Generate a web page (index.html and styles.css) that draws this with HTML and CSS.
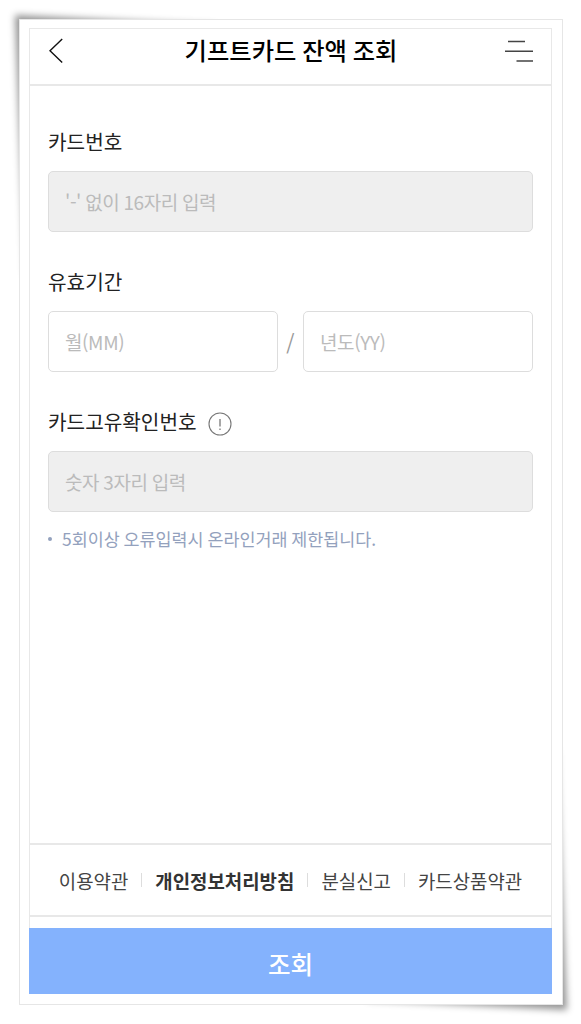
FILE: index.html
```
<!DOCTYPE html>
<html lang="ko">
<head>
    <meta charset="UTF-8">
    <meta name="viewport" content="width=device-width, initial-scale=1.0">
    <title>기프트카드 잔액 조회</title>
    <link rel="stylesheet" href="styles.css">
</head>
<body>
    <div class="frame">
        <div class="shadow shadow-top"></div>
        <div class="shadow shadow-bottom"></div>
        <div class="paper">
            <div class="screen">
                <header class="header">
                    <svg class="back" width="14" height="26" viewBox="0 0 14 26">
                        <path d="M13.2 1 1 12.8 13.2 24.5" fill="none" stroke="#111" stroke-width="1.4"/>
                    </svg>
                    <h1>기프트카드 잔액 조회</h1>
                    <svg class="menu" width="28" height="22" viewBox="0 0 28 22">
                        <path d="M3 1.5h17M0 11.2h28M11.5 21h16.5" fill="none" stroke="#444" stroke-width="1.4"/>
                    </svg>
                </header>

                <main class="content">
                    <div class="form-group">
                        <label for="cardNumber">카드번호</label>
                        <input type="text" id="cardNumber" class="filled" placeholder="'-' 없이 16자리 입력">
                    </div>

                    <div class="form-group">
                        <label for="month">유효기간</label>
                        <div class="expiry">
                            <input type="text" id="month" placeholder="월(MM)">
                            <span class="slash">/</span>
                            <input type="text" id="year" placeholder="년도(YY)">
                        </div>
                    </div>

                    <div class="form-group">
                        <label for="cvc">카드고유확인번호
                            <svg class="info" width="24" height="24" viewBox="0 0 24 24">
                                <circle cx="12" cy="12" r="11" fill="none" stroke="#777" stroke-width="1.1"/>
                                <path d="M12 7v7.5M12 16.5v1.5" stroke="#777" stroke-width="1.3"/>
                            </svg>
                        </label>
                        <input type="text" id="cvc" class="filled" placeholder="숫자 3자리 입력">
                    </div>

                    <p class="notice">5회이상 오류입력시 온라인거래 제한됩니다.</p>
                </main>

                <footer class="footer">
                    <a>이용약관</a>
                    <a class="bold">개인정보처리방침</a>
                    <a>분실신고</a>
                    <a>카드상품약관</a>
                </footer>
                <button type="button">조회</button>
            </div>
        </div>
    </div>
</body>
</html>
```
FILE: styles.css
```
* {
    box-sizing: border-box;
}
body {
    margin: 0;
    padding: 19px 18px 19px 19px;
    height: 1024px;
    overflow: hidden;
    background-color: #fff;
    font-family: 'Noto Sans CJK KR', sans-serif;
    color: #222;
}
.frame {
    position: relative;
    width: 544px;
    height: 986px;
}
.paper {
    position: relative;
    height: 100%;
    padding: 8px 10px 10px 9px;
    border: 1px solid #e6e6e6;
    background-color: #fff;
}
/* 모서리가 들린 종이 그림자 */
.shadow {
    position: absolute;
    width: 220px;
    height: 280px;
    filter: blur(3.5px);
}
.shadow::before {
    content: '';
    display: block;
    height: 100%;
    background-color: rgba(0, 0, 0, 0.42);
}
.shadow-top {
    left: -4px;
    top: -4px;
}
.shadow-top::before {
    clip-path: polygon(0 0, 200px 10px, 10px 260px);
}
.shadow-bottom {
    right: -4px;
    bottom: -5px;
}
.shadow-bottom::before {
    clip-path: polygon(100% 100%, 20px 270px, 210px 20px);
}
.screen {
    display: flex;
    flex-direction: column;
    height: 100%;
    border: 1px solid #e8e8e8;
    border-bottom: none;
}
.header {
    display: flex;
    align-items: center;
    justify-content: space-between;
    height: 57px;
    padding: 0 18px 11px 19px;
    border-bottom: 2px solid #e8e8e8;
}
h1 {
    margin: -2px 0 0 14px;
    font-size: 24.3px;
    line-height: 36px;
    font-weight: 500;
    word-spacing: -1px;
    color: #000;
}
.content {
    flex: 1;
    padding: 41px 18px 0;
}
.form-group {
    margin-bottom: 35px;
}
label {
    display: flex;
    align-items: center;
    gap: 11px;
    height: 29px;
    margin-bottom: 15px;
    font-size: 20.2px;
}
.info {
    margin-top: 5px;
}
input {
    display: block;
    width: 100%;
    height: 61px;
    padding: 0 16px;
    border: 1px solid #ddd;
    border-radius: 5px;
    background-color: #fff;
    font-family: inherit;
    font-size: 19px;
    letter-spacing: -0.4px;
    word-spacing: -0.8px;
}
input::placeholder {
    color: #bbb;
}
.filled {
    background-color: #efefef;
}
.expiry {
    display: flex;
    align-items: center;
}
.expiry input {
    flex: 1;
    min-width: 0;
}
.slash {
    width: 25px;
    text-align: center;
    font-size: 21px;
    color: #999;
}
.notice {
    display: flex;
    align-items: center;
    margin: -21px 0 0;
    font-size: 17.4px;
    line-height: 26px;
    word-spacing: -1px;
    color: #93a1bd;
}
.notice::before {
    content: '';
    width: 4px;
    height: 4px;
    margin-right: 10px;
    border-radius: 50%;
    background-color: #93a1bd;
}
.footer {
    display: flex;
    align-items: center;
    justify-content: center;
    height: 74px;
    margin-bottom: 11px;
    border-top: 2px solid #e8e8e8;
    border-bottom: 2px solid #e8e8e8;
    font-size: 18.9px;
    color: #444;
}
.footer a {
    display: flex;
    align-items: center;
}
.footer a + a::before {
    content: '';
    width: 1px;
    height: 14px;
    margin: 0 13px;
    background-color: #ddd;
}
.footer .bold {
    font-weight: bold;
    color: #333;
}
button {
    height: 66px;
    margin: 0 -1px;
    padding: 5px 0 0;
    border: none;
    background-color: #84b2fd;
    font-family: inherit;
    font-size: 24.5px;
    font-weight: 500;
    color: #fff;
}
```
